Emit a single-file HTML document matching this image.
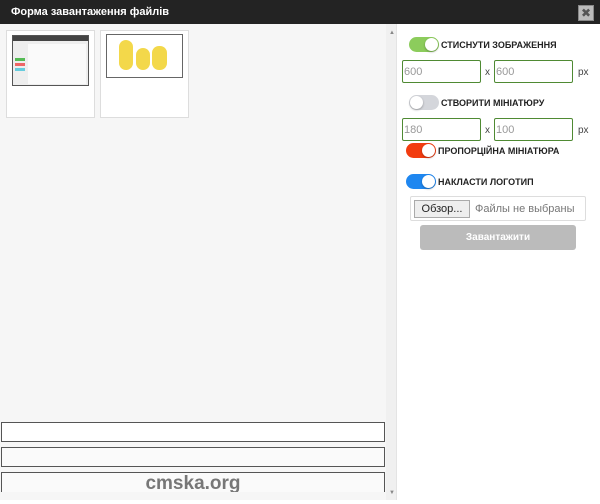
<!DOCTYPE html>
<html><head><meta charset="utf-8"><style>
*{box-sizing:border-box;margin:0;padding:0}
body{width:600px;height:504px;background:#fff;font-family:"Liberation Sans",sans-serif;position:relative;overflow:hidden}
.hd{position:absolute;left:0;top:0;width:600px;height:24px;background:#232323;color:#fff;font-size:11px;font-weight:bold;padding:6px 0 0 11px}
.cl{position:absolute;left:578px;top:5px;width:16px;height:16px;background:#bbb;border:1px solid #888;color:#555;font-size:12px;line-height:14px;text-align:center}
.lp{position:absolute;left:0;top:24px;width:386px;height:474px;background:#f6f6f6}
.sb{position:absolute;left:386px;top:24px;width:11px;height:476px;background:#f0f0f0;border-right:1px solid #e4e4e4}
.th{position:absolute;top:30px;width:89px;height:88px;background:#fff;border:1px solid #ddd}
.fld{position:absolute;left:1px;width:384px;height:20px;border:1px solid #555;background:#fff}
.a{position:absolute}
.tg{position:absolute;width:30px;height:15px;border-radius:8px}
.tg i{position:absolute;top:1px;width:13px;height:13px;border-radius:50%;background:#fff;box-shadow:0 1px 2px rgba(0,0,0,.3)}
.lb{position:absolute;font-size:9px;font-weight:bold;color:#222}
.in{position:absolute;width:79px;height:23px;border:1px solid #4f8a33;border-radius:2px;font-size:11px;color:#999;padding:5px 0 0 1px}
.t{position:absolute;font-size:10px;color:#444}
</style></head><body>
<div class="hd">Форма завантаження файлів</div>
<div class="cl">✖</div>
<div class="lp"></div>
<div class="sb"><div style="position:absolute;left:3px;top:6px;font-size:6px;color:#888">▲</div><div style="position:absolute;left:3px;top:466px;font-size:6px;color:#888">▼</div></div>
<div class="th" style="left:6px"><div class="a" style="left:5px;top:4px;width:77px;height:51px;border:1px solid #555;background:#eee">
<div class="a" style="left:0;top:0;width:75px;height:5px;background:#444"></div>
<div class="a" style="left:2px;top:22px;width:10px;height:3px;background:#5b5"></div>
<div class="a" style="left:2px;top:27px;width:10px;height:3px;background:#e66"></div>
<div class="a" style="left:2px;top:32px;width:10px;height:3px;background:#6cd"></div>
<div class="a" style="left:15px;top:8px;width:58px;height:40px;background:#fafafa"></div></div></div>
<div class="th" style="left:100px"><div class="a" style="left:5px;top:3px;width:77px;height:44px;border:1px solid #666;background:#fff">
<div class="a" style="left:12px;top:5px;width:14px;height:30px;background:#f3d84a;border-radius:7px"></div>
<div class="a" style="left:29px;top:13px;width:14px;height:22px;background:#f3d84a;border-radius:7px"></div>
<div class="a" style="left:45px;top:11px;width:15px;height:24px;background:#f3d84a;border-radius:7px"></div></div></div>
<div class="fld" style="top:422px"></div>
<div class="fld" style="top:447px;background:#fafafa"></div>
<div class="fld" style="top:472px;height:20px;border-bottom:none;background:#fafafa;text-align:center;font-size:19px;font-weight:bold;color:#777;line-height:22px;overflow:hidden">cmska.org</div>
<div class="a" style="left:0;top:492px;width:386px;height:8px;background:#f6f6f6"></div>

<div class="tg" style="left:409px;top:37px;background:#8ccc5c"><i style="left:16px"></i></div>
<div class="lb" style="left:441px;top:40px">СТИСНУТИ ЗОБРАЖЕННЯ</div>
<div class="in" style="left:402px;top:60px">600</div><div class="t" style="left:485px;top:67px">x</div>
<div class="in" style="left:494px;top:60px">600</div><div class="t" style="left:578px;top:67px">px</div>

<div class="tg" style="left:409px;top:95px;background:#d4d6db"><i style="left:1px"></i></div>
<div class="lb" style="left:441px;top:98px">СТВОРИТИ МІНІАТЮРУ</div>
<div class="in" style="left:402px;top:118px">180</div><div class="t" style="left:485px;top:125px">x</div>
<div class="in" style="left:494px;top:118px">100</div><div class="t" style="left:578px;top:125px">px</div>

<div class="tg" style="left:406px;top:143px;background:#f23c10"><i style="left:16px"></i></div>
<div class="lb" style="left:438px;top:146px">ПРОПОРЦІЙНА МІНІАТЮРА</div>
<div class="tg" style="left:406px;top:174px;background:#1f87f0"><i style="left:16px"></i></div>
<div class="lb" style="left:438px;top:177px">НАКЛАСТИ ЛОГОТИП</div>

<div class="a" style="left:410px;top:196px;width:176px;height:25px;border:1px solid #ddd;border-radius:2px"></div>
<div class="a" style="left:414px;top:200px;width:56px;height:18px;background:#eee;border:1px solid #aaa;font-size:11px;color:#222;text-align:center;line-height:16px">Обзор...</div>
<div class="t" style="left:475px;top:203px;font-size:11px;color:#777">Файлы не выбраны</div>
<div class="a" style="left:420px;top:225px;width:156px;height:25px;background:#bbb;border-radius:3px;color:#fff;font-size:10px;font-weight:bold;text-align:center;line-height:25px">Завантажити</div>
</body></html>
